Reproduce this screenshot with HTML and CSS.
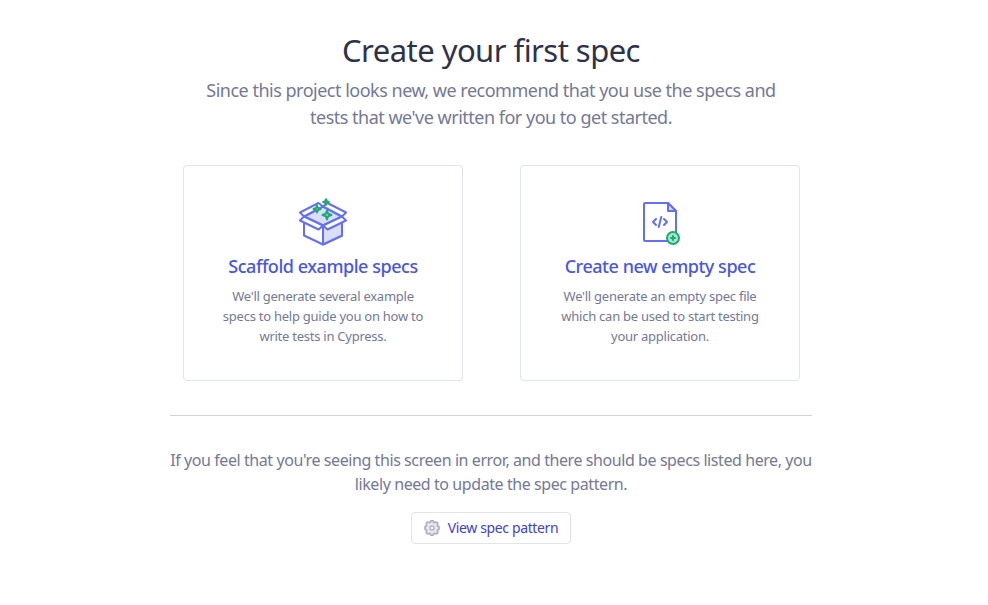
FILE: index.html
```html
<!DOCTYPE html>
<html lang="en">
<head>
    <meta charset="UTF-8">
    <meta name="viewport" content="width=device-width, initial-scale=1.0">
    <title>Create your first spec</title>
    <link rel="stylesheet" href="styles.css">
</head>
<body>
    <main class="container">
        <h1>Create your first spec</h1>
        <p class="intro">
            <span>Since this project looks new, we recommend that you use the specs and</span><br>
            <span>tests that we've written for you to get started.</span>
        </p>

        <div class="cards">
            <button class="card" type="button">
                <svg class="card-icon" width="48" height="48" viewBox="0 0 48 48" fill="none" stroke="#6470f3" stroke-width="2" stroke-linejoin="round" stroke-linecap="round">
                    <path d="M5 23v14.500l19 9 19-9V23L24 28z" fill="#fff"/>
                    <path d="M24 28v18.500l19-9V23z" fill="#dadefc"/>
                    <path d="M5 18.500L24 8.500l19 10-19 9z" fill="#dadefc"/>
                    <path d="M5 18.500l-4-4L19.500 5 24 8.500zM43 18.500l4-4L28.500 5 24 8.500zM5 18.500l-4 4 18.500 9L24 27.500zM43 18.500l4 4-18.500 9L24 27.500z" fill="#fff"/>
                    <g fill="#a3e7cb" stroke="#1fa971">
                        <path d="M28 12.500l1.200 3.300 3.300 1.200-3.300 1.200L28 21.500l-1.200-3.300-3.300-1.200 3.300-1.200z"/>
                        <path d="M18 7.500l1 2.500 2.500 1-2.500 1-1 2.500-1-2.500-2.500-1 2.500-1z"/>
                        <path d="M27 1.200l.8 2 2 .8-2 .8-.8 2-.8-2-2-.8 2-.8z" fill="#1fa971"/>
                    </g>
                </svg>
                <h2>Scaffold example specs</h2>
                <p>
                    <span>We'll generate several example</span><br>
                    <span>specs to help guide you on how to</span><br>
                    <span>write tests in Cypress.</span>
                </p>
            </button>

            <button class="card" type="button">
                <svg class="card-icon" width="48" height="48" viewBox="0 0 48 48" fill="none" stroke="#6470f3" stroke-width="2" stroke-linejoin="round" stroke-linecap="round">
                    <path d="M32 5H9a1 1 0 0 0-1 1v36a1 1 0 0 0 1 1h30a1 1 0 0 0 1-1V13z" fill="#fff"/>
                    <path d="M32 5v8h8z" fill="#dadefc"/>
                    <path d="M20 21l-3 3 3 3M28 21l3 3-3 3M25.300 19l-2.600 10"/>
                    <circle cx="37" cy="40" r="6" fill="#a3e7cb" stroke="#1fa971"/>
                    <path d="M37 38v4M35 40h4" stroke="#1fa971"/>
                </svg>
                <h2>Create new empty spec</h2>
                <p>
                    <span>We'll generate an empty spec file</span><br>
                    <span>which can be used to start testing</span><br>
                    <span>your application.</span>
                </p>
            </button>
        </div>

        <div class="footer">
            <p>
                <span>If you feel that you're seeing this screen in error, and there should be specs listed here, you</span><br>
                <span>likely need to update the spec pattern.</span>
            </p>
            <button class="pattern-button" type="button">
                <svg width="16" height="16" viewBox="0 0 16 16" fill="#e8eaf2" stroke="#afb3c7" stroke-width="1.800" stroke-linejoin="round">
                    <path d="M6.700 1h2.600l.7 1.700 2.600-.5 1.200 1.200-.5 2.600 1.700.7v2.600l-1.700.7.5 2.600-1.200 1.200-2.600-.5-.7 1.700H6.700L6 13.300l-2.600.5-1.200-1.200.5-2.600L1 9.300V6.700L2.700 6l-.5-2.600 1.200-1.200 2.600.5z"/>
                    <circle cx="8" cy="8" r="2" fill="#fff" stroke-width="1.500"/>
                </svg>
                <span>View spec pattern</span>
            </button>
        </div>
    </main>
</body>
</html>
```

FILE: styles.css
```css
* {
    box-sizing: border-box;
}

body {
    margin: 0;
    padding: 30px 6px 0 0;
    background-color: #fff;
    color: #747994;
    font-family: "Segoe UI", "Noto Sans", sans-serif;
}

h1, h2, p {
    margin: 0;
    font-weight: 400;
    white-space: nowrap;
}

button {
    background-color: #fff;
    border: 1px solid #e1e3ed;
    border-radius: 4px;
    color: inherit;
    font-family: inherit;
    cursor: pointer;
}

.container {
    width: 642px;
    margin: 0 auto;
    text-align: center;
}

h1 {
    color: #2e3247;
    font-size: 31px;
    line-height: 40px;
    letter-spacing: -0.54px;
}

.intro {
    margin-top: 7px;
    font-size: 18px;
    line-height: 27px;
    letter-spacing: -0.5px;
}

.cards {
    display: flex;
    justify-content: space-between;
    margin-top: 34px;
    padding: 0 12px 0 13px;
}

.card {
    display: flex;
    flex-direction: column;
    align-items: center;
    width: 280px;
    height: 216px;
    padding: 32px 0 0;
}

.card h2 {
    margin-top: 8px;
    color: #4956e3;
    font-size: 18px;
    font-weight: 500;
    line-height: 24px;
    letter-spacing: -0.46px;
}

.card p {
    margin-top: 8px;
    font-size: 13px;
    line-height: 20px;
    letter-spacing: -0.25px;
}

.footer {
    margin-top: 34px;
    padding-top: 32px;
    border-top: 1px solid #d0d2e0;
}

.footer p {
    font-size: 16px;
    line-height: 24px;
    letter-spacing: -0.42px;
}

.pattern-button {
    display: inline-flex;
    align-items: center;
    justify-content: center;
    gap: 8px;
    width: 160px;
    height: 32px;
    margin-top: 16px;
    padding: 0 0 1px;
    color: #4340c8;
    font-size: 14px;
    letter-spacing: -0.37px;
    white-space: nowrap;
}
```
